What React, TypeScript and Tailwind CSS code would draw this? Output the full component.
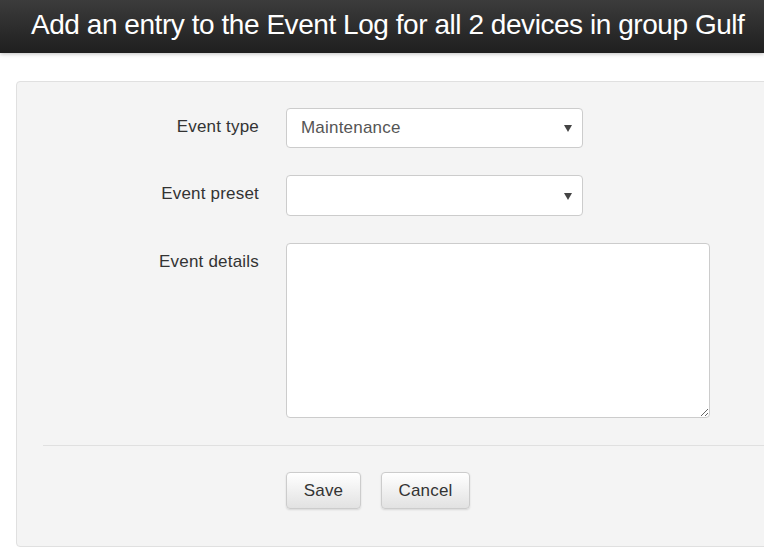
import React from "react";

const Caret = () => (
  <svg width="8" height="8" viewBox="0 0 8 8" className="absolute right-[10px] top-1/2 -translate-y-1/2">
    <path d="M0 1 L8 1 L4 8 Z" fill="#444" />
  </svg>
);

export default function App() {
  return (
    <div className="w-[764px] h-[560px] bg-white overflow-hidden" style={{ fontFamily: '"Liberation Sans", Arial, sans-serif' }}>
      <div className="h-[53px] bg-gradient-to-b from-[#3c3c3c] to-[#1f1f1f] shadow-[0_1px_4px_rgba(0,0,0,0.25)] flex items-start pt-[11px] pl-[31px] whitespace-nowrap">
        <span className="text-white text-[28px] leading-none tracking-[-0.45px]">Add an entry to the Event Log for all 2 devices in group Gulf</span>
      </div>
      <div className="ml-[16px] mt-[28px] w-[760px] h-[466px] bg-[#f4f4f4] border border-[#e0e0e0] rounded-[4px] pt-[26px]">
        <div className="flex items-start">
          <div className="w-[242px] text-right text-[17px] tracking-[0.2px] text-[#333] pt-[10px] leading-none">Event type</div>
          <div className="ml-[27px] relative w-[297px] h-[40px] bg-white border border-[#ccc] rounded-[4px] flex items-center pl-[14px] text-[17px] tracking-[0.2px] text-[#555]">
            Maintenance
            <Caret />
          </div>
        </div>
        <div className="flex items-start mt-[27px]">
          <div className="w-[242px] text-right text-[17px] tracking-[0.2px] text-[#333] pt-[10px] leading-none">Event preset</div>
          <div className="ml-[27px] relative w-[297px] h-[41px] bg-white border border-[#ccc] rounded-[4px]">
            <Caret />
          </div>
        </div>
        <div className="flex items-start mt-[27px]">
          <div className="w-[242px] text-right text-[17px] tracking-[0.2px] text-[#333] pt-[10px] leading-none">Event details</div>
          <textarea className="ml-[27px] w-[424px] h-[175px] bg-white border border-[#ccc] rounded-[4px] resize-y outline-none block" />
        </div>
        <div className="ml-[26px] mt-[27px] border-t border-[#e0e0e0]" />
        <div className="flex ml-[269px] mt-[26px] gap-[20px]">
          <button className="w-[75px] h-[37px] rounded-[4px] border border-[#ccc] bg-gradient-to-b from-white to-[#e2e2e2] text-[17px] tracking-[0.2px] text-[#333] shadow-[0_1px_2px_rgba(0,0,0,0.12)]">Save</button>
          <button className="w-[89px] h-[37px] rounded-[4px] border border-[#ccc] bg-gradient-to-b from-white to-[#e2e2e2] text-[17px] tracking-[0.2px] text-[#333] shadow-[0_1px_2px_rgba(0,0,0,0.12)]">Cancel</button>
        </div>
      </div>
    </div>
  );
}
